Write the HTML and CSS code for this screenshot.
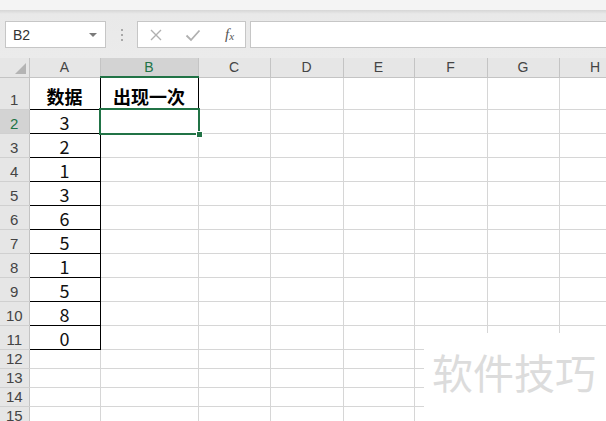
FILE: index.html
```html
<!DOCTYPE html>
<html>
<head>
<meta charset="utf-8">
<link rel="stylesheet" href="styles.css">
</head>
<body>
<div class="top"></div>
<div class="fbar">
  <div class="namebox"><span class="ref">B2</span><span class="caret"></span></div>
  <div class="grip"><i></i><i></i><i></i></div>
  <div class="fbtns">
    <svg class="ic" width="14" height="14" viewBox="0 0 14 14"><path d="M2 2L12 12M12 2L2 12" stroke="#b0b0b0" stroke-width="1.4" fill="none"/></svg>
    <svg class="ic" width="16" height="14" viewBox="0 0 16 14"><path d="M1.5 7.5L6 12L14.5 2.5" stroke="#b0b0b0" stroke-width="1.8" fill="none"/></svg>
    <span class="fx">f<sub>x</sub></span>
  </div>
  <div class="finput"></div>
</div>
<div class="sheet">
  <table class="grid">
    <colgroup>
      <col class="w-rh"><col class="w-a"><col class="w-b"><col class="w-c"><col class="w-d"><col class="w-e"><col class="w-f"><col class="w-g"><col class="w-h">
    </colgroup>
    <tr class="hdr">
      <td class="corner"><span class="tri"></span></td>
      <td class="ch">A</td><td class="ch selc">B</td><td class="ch">C</td><td class="ch">D</td><td class="ch">E</td><td class="ch">F</td><td class="ch">G</td><td class="ch">H</td>
    </tr>
    <tr class="r1"><td class="rh">1</td><td class="blk head">数据</td><td class="blk head">出现一次</td><td></td><td></td><td></td><td></td><td></td><td></td></tr>
    <tr class="rn"><td class="rh selr">2</td><td class="blk num">3</td><td class="sel"></td><td></td><td></td><td></td><td></td><td></td><td></td></tr>
    <tr class="rn"><td class="rh">3</td><td class="blk num">2</td><td></td><td></td><td></td><td></td><td></td><td></td><td></td></tr>
    <tr class="rn"><td class="rh">4</td><td class="blk num">1</td><td></td><td></td><td></td><td></td><td></td><td></td><td></td></tr>
    <tr class="rn"><td class="rh">5</td><td class="blk num">3</td><td></td><td></td><td></td><td></td><td></td><td></td><td></td></tr>
    <tr class="rn"><td class="rh">6</td><td class="blk num">6</td><td></td><td></td><td></td><td></td><td></td><td></td><td></td></tr>
    <tr class="rn"><td class="rh">7</td><td class="blk num">5</td><td></td><td></td><td></td><td></td><td></td><td></td><td></td></tr>
    <tr class="rn"><td class="rh">8</td><td class="blk num">1</td><td></td><td></td><td></td><td></td><td></td><td></td><td></td></tr>
    <tr class="rn"><td class="rh">9</td><td class="blk num">5</td><td></td><td></td><td></td><td></td><td></td><td></td><td></td></tr>
    <tr class="rn"><td class="rh">10</td><td class="blk num">8</td><td></td><td></td><td></td><td></td><td></td><td></td><td></td></tr>
    <tr class="rn"><td class="rh">11</td><td class="blk num">0</td><td></td><td></td><td></td><td></td><td></td><td></td><td></td></tr>
    <tr class="rs"><td class="rh">12</td><td></td><td></td><td></td><td></td><td></td><td></td><td></td><td></td></tr>
    <tr class="rs"><td class="rh">13</td><td></td><td></td><td></td><td></td><td></td><td></td><td></td><td></td></tr>
    <tr class="rs"><td class="rh">14</td><td></td><td></td><td></td><td></td><td></td><td></td><td></td><td></td></tr>
    <tr class="rs"><td class="rh">15</td><td></td><td></td><td></td><td></td><td></td><td></td><td></td><td></td></tr>
  </table>
  <div class="wm">软件技巧</div>
</div>
</body>
</html>
```
FILE: styles.css
```css
html, body {
  margin: 0;
  padding: 0;
}
body {
  width: 606px;
  height: 421px;
  overflow: hidden;
  background: #fff;
  font-family: "Noto Sans CJK SC", "Liberation Sans", sans-serif;
}
.top {
  height: 10px;
  background: #f4f4f4;
}
.fbar {
  height: 27px;
  padding: 11px 0 10px 5px;
  background: linear-gradient(#d6d6d6, #e9e9e9 4px, #ebebeb);
  display: flex;
  align-items: stretch;
}
.namebox {
  border: 1px solid #c6c6c6;
  background: #fff;
  display: flex;
  align-items: center;
  justify-content: space-between;
  padding: 0 8px 0 7px;
  box-sizing: border-box;
  width: 101px;
}
.ref {
  font-family: "Liberation Sans", sans-serif;
  font-size: 14px;
  color: #333;
}
.caret {
  width: 0;
  height: 0;
  border-left: 4px solid transparent;
  border-right: 4px solid transparent;
  border-top: 4px solid #7a7a7a;
}
.grip {
  width: 31px;
  display: flex;
  flex-direction: column;
  align-items: center;
  justify-content: center;
  gap: 3px;
}
.grip i {
  width: 2px;
  height: 2px;
  background: #a8a8a8;
}
.fbtns {
  width: 109px;
  box-sizing: border-box;
  border: 1px solid #c6c6c6;
  background: #fff;
  display: flex;
  align-items: center;
  padding-left: 11px;
  gap: 22px;
}
.fx {
  font-family: "Liberation Serif", serif;
  font-style: italic;
  font-size: 15px;
  color: #555;
  margin-left: 2px;
  line-height: 1;
}
.fx sub {
  font-size: 11px;
  vertical-align: -1px;
}
.finput {
  flex: 1;
  margin-left: 4px;
  border: 1px solid #c6c6c6;
  border-right: none;
  background: #fff;
}
.sheet {
  position: relative;
  height: 363px;
  overflow: hidden;
}
.grid {
  table-layout: fixed;
  border-collapse: collapse;
  width: 631px;
}
.w-rh { width: 29px; }
.w-a { width: 71px; }
.w-b { width: 98px; }
.w-c { width: 72px; }
.w-d { width: 73px; }
.w-e { width: 71px; }
.w-f { width: 73px; }
.w-g { width: 72px; }
.w-h { width: 72px; }
.grid td {
  border: 1px solid #d6d6d6;
  padding: 0;
  text-align: center;
  vertical-align: bottom;
  overflow: hidden;
  white-space: nowrap;
}
.grid tr.hdr { height: 19px; }
.grid tr.r1 { height: 32px; }
.grid tr.rn { height: 24px; }
.grid tr.rs { height: 19px; }
.grid td.ch {
  background: #e6e6e6;
  border-top: none;
  border-right: 1px solid #c4c4c4;
  border-bottom: 1px solid #c4c4c4;
  font-family: "Liberation Sans", sans-serif;
  font-size: 14px;
  color: #444;
  line-height: 18px;
  vertical-align: middle;
}
.grid td.selc {
  background: #d3d3d3;
  color: #217346;
  border-bottom: 2px solid #217346;
}
.grid td.corner {
  background: #e6e6e6;
  border-top: none;
  border-left: none;
  border-right: 1px solid #c4c4c4;
  border-bottom: 1px solid #c4c4c4;
  position: relative;
}
.tri {
  position: absolute;
  right: 3px;
  bottom: 3px;
  width: 0;
  height: 0;
  border-left: 11px solid transparent;
  border-bottom: 11px solid #b4b4b4;
}
.grid td.rh {
  background: #e6e6e6;
  border-left: none;
  border-right: 1px solid #c4c4c4;
  border-bottom: 1px solid #d0d0d0;
  font-family: "Liberation Sans", sans-serif;
  font-size: 15px;
  color: #444;
  line-height: 18px;
}
.grid td.selr {
  background: #d3d3d3;
  color: #217346;
}
.grid td.blk {
  border: 1px solid #000;
}
.head {
  font-weight: bold;
  font-size: 18px;
  line-height: 26px;
  color: #000;
}
.num {
  font-size: 18px;
  line-height: 22px;
  color: #111;
}
.grid td.sel {
  position: relative;
  overflow: visible;
}
.grid td.sel::after {
  content: "";
  position: absolute;
  left: -2px;
  top: -2px;
  right: -2px;
  bottom: -2px;
  border: 2px solid #217346;
  z-index: 2;
}
.grid td.sel::before {
  content: "";
  position: absolute;
  right: -5px;
  bottom: -5px;
  width: 5px;
  height: 5px;
  background: #217346;
  border: 1px solid #fff;
  z-index: 3;
}
.wm {
  position: absolute;
  left: 424px;
  top: 275px;
  right: 0;
  bottom: 0;
  background: #fff;
  font-size: 41px;
  line-height: 1;
  color: #dcdcdc;
  padding: 18px 0 0 8px;
  white-space: nowrap;
}
```
